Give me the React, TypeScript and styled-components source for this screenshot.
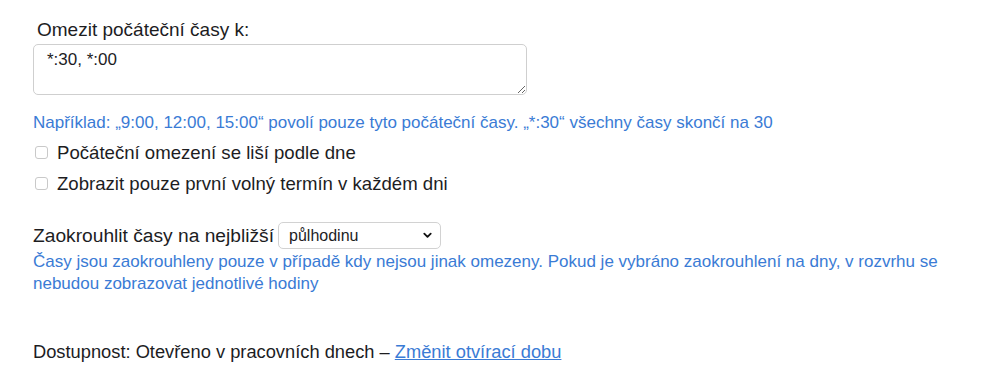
import React from 'react';
import styled, { createGlobalStyle } from 'styled-components';

const GlobalStyle = createGlobalStyle`
  body {
    margin: 0;
    background: #fff;
    font-family: "Liberation Sans", Arial, sans-serif;
    color: #1d1d1f;
  }
`;

const Page = styled.div`
  padding: 18px 0 0 33px;
`;

const FieldLabel = styled.label`
  display: block;
  font-size: 19px;
  line-height: 24px;
  padding-left: 4px;
  margin-bottom: 2px;
`;

const TextArea = styled.textarea`
  display: block;
  box-sizing: border-box;
  width: 494px;
  height: 51px;
  padding: 5px 13px;
  border: 1px solid #cfcfcf;
  border-radius: 5px;
  font-family: "Liberation Sans", Arial, sans-serif;
  font-size: 17px;
  color: #1d1d1f;
  resize: vertical;
  outline: none;
`;

const Hint = styled.p<{ $top?: number }>`
  margin: ${p => p.$top ?? 0}px 0 0;
  font-size: 17px;
  line-height: 22px;
  color: #3a7bd5;
  max-width: 912px;
`;

const CheckList = styled.div`
  margin-top: 3px;
`;

const CheckRow = styled.label`
  display: flex;
  align-items: center;
  gap: 9px;
  height: 31px;
  font-size: 18.6px;
  padding-left: 2px;
`;

const Check = styled.input.attrs({ type: 'checkbox' })`
  appearance: none;
  margin: 0;
  width: 13px;
  height: 13px;
  border: 1px solid #c9c9c9;
  border-radius: 3px;
  background: #fff;
`;

const SelectRow = styled.div`
  display: flex;
  align-items: center;
  gap: 4px;
  margin-top: 23px;
  font-size: 19.2px;
`;

const SelectWrap = styled.div`
  position: relative;
  width: 163px;
  height: 27px;
`;

const Select = styled.select`
  appearance: none;
  box-sizing: border-box;
  width: 100%;
  height: 100%;
  padding: 0 28px 0 10px;
  border: 1px solid #d2d2d2;
  border-radius: 5px;
  background: #fff;
  font-family: "Liberation Sans", Arial, sans-serif;
  font-size: 16px;
  color: #1d1d1f;
  outline: none;
`;

const Chevron = styled.svg`
  position: absolute;
  right: 8px;
  top: 8px;
  pointer-events: none;
`;

const Footer = styled.p`
  margin: 45px 0 0;
  font-size: 18.3px;
  line-height: 24px;
`;

const Link = styled.a`
  color: #3a7bd5;
  text-decoration: underline;
`;

export default function App() {
  return (
    <>
      <GlobalStyle />
      <Page>
        <FieldLabel htmlFor="starts">Omezit počáteční časy k:</FieldLabel>
        <TextArea id="starts" defaultValue="*:30, *:00" />
        <Hint $top={17}>
          Například: „9:00, 12:00, 15:00“ povolí pouze tyto počáteční časy. „*:30“ všechny časy skončí na 30
        </Hint>
        <CheckList>
          <CheckRow>
            <Check />
            Počáteční omezení se liší podle dne
          </CheckRow>
          <CheckRow>
            <Check />
            Zobrazit pouze první volný termín v každém dni
          </CheckRow>
        </CheckList>
        <SelectRow>
          Zaokrouhlit časy na nejbližší
          <SelectWrap>
            <Select defaultValue="half">
              <option value="half">půlhodinu</option>
              <option value="hour">hodinu</option>
              <option value="day">den</option>
            </Select>
            <Chevron width="11" height="11" viewBox="0 0 24 24" fill="none" stroke="#111" strokeWidth="4" strokeLinecap="round" strokeLinejoin="round">
              <path d="M5 8l7 7 7-7" />
            </Chevron>
          </SelectWrap>
        </SelectRow>
        <Hint $top={2}>
          Časy jsou zaokrouhleny pouze v případě kdy nejsou jinak omezeny. Pokud je vybráno zaokrouhlení na dny, v rozvrhu se nebudou zobrazovat jednotlivé hodiny
        </Hint>
        <Footer>
          Dostupnost: Otevřeno v pracovních dnech – <Link href="#">Změnit otvírací dobu</Link>
        </Footer>
      </Page>
    </>
  );
}
